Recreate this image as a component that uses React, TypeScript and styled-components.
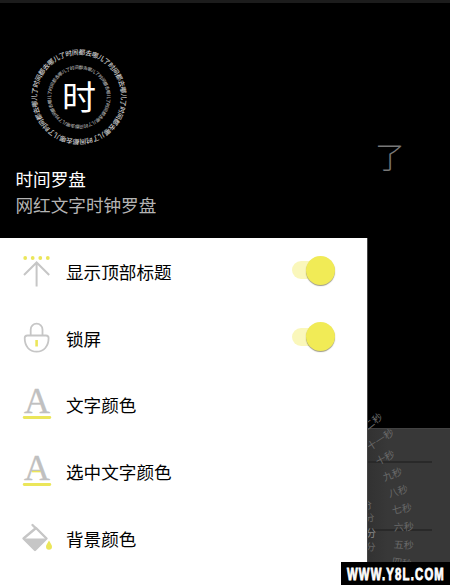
import React from 'react';
import styled, { createGlobalStyle } from 'styled-components';

const GlobalStyle = createGlobalStyle`
  body {
    margin: 0;
    background: #000;
    font-family: 'Noto Sans CJK SC', sans-serif;
  }
`;

const Screen = styled.div`
  position: relative;
  width: 450px;
  height: 585px;
  overflow: hidden;
  background: #000;
`;

const StatusBar = styled.div`
  height: 3px;
  background: #1c1c1c;
`;

const Drawer = styled.aside`
  position: relative;
  z-index: 1;
  width: 367px;
  height: 582px;
  display: flex;
  flex-direction: column;
  background: #fff;
  border-right: 1px solid #444;
`;

const DrawerHeader = styled.header`
  box-sizing: border-box;
  width: 368px;
  height: 235px;
  padding: 44px 0 0 15.5px;
  background: #000;
`;

const Logo = styled.svg`
  display: block;
  width: 100px;
  height: 100px;
  margin-left: 13.5px;
`;

const AppName = styled.h1`
  margin: 19px 0 0;
  font-size: 17.6px;
  line-height: 26px;
  font-weight: 400;
  color: #fff;
`;

const Tagline = styled.p`
  margin: 0;
  font-size: 17.6px;
  line-height: 26px;
  color: #b4b4b4;
`;

const Menu = styled.ul`
  margin: 0;
  padding: 1px 0 0;
  list-style: none;
`;

const MenuItem = styled.li`
  display: flex;
  align-items: center;
  height: 66.6px;
  padding: 0 32px 0 20px;
`;

const IconSvg = styled.svg`
  flex: none;
  width: 36px;
  height: 36px;
  margin-right: 10px;
  overflow: visible;
`;

const Label = styled.span`
  flex: 1;
  font-size: 17.6px;
  line-height: 26px;
  color: #000;
`;

const Switch = styled.span`
  display: flex;
  justify-content: flex-end;
  align-items: center;
  width: 43px;
  height: 18px;
  margin-top: -4px;
  border-radius: 9px;
  background: linear-gradient(90deg, #faf7bb 60%, transparent 60%);
`;

const Knob = styled.span`
  width: 29px;
  height: 29px;
  border-radius: 50%;
  background: #f1eb56;
  box-shadow: 0 1px 1px rgba(90, 85, 50, 0.6);
`;

const Backdrop = styled.div`
  position: absolute;
  inset: 0;
`;

const DimChar = styled.span`
  position: absolute;
  left: 375px;
  top: 135px;
  font-size: 30px;
  line-height: 40px;
  font-weight: 300;
  color: #787878;
`;

const Panel = styled.div`
  position: absolute;
  left: 368px;
  right: 0;
  top: 428px;
  bottom: 0;
  border-top: 1px solid #424242;
  background: linear-gradient(90deg, #323232, #383838 20px);
`;

const Divider = styled.div`
  width: 64px;
  height: 2px;
  margin-top: 32px;
  background: #292929;

  & + & {
    margin-top: 66px;
  }
`;

const Dial = styled.svg`
  position: absolute;
  inset: 0;
  width: 450px;
  height: 585px;
  font-size: 10px;
`;

const Watermark = styled.svg`
  position: absolute;
  z-index: 2;
  right: 0;
  bottom: 0;
  width: 109px;
  height: 23px;
  overflow: visible;
  background: #000;
  font: 900 17px 'Liberation Sans', sans-serif;
`;

const PHRASE = '时间都去哪儿了';
const RING = PHRASE.repeat(6).split('');

const SECONDS = ['十二秒', '十一秒', '十秒', '九秒', '八秒', '七秒', '六秒', '五秒', '四秒'];
const DIAL_X = 232;
const DIAL_Y = 536;

const Ring: React.FC<{ radius: number; size: number; color: string }> = ({ radius, size, color }) => (
  <g fontSize={size} fill={color} fontWeight={500} textAnchor="middle">
    {RING.map((char, i) => (
      <text key={i} x="50" y={50 - radius} transform={`rotate(${46.6 + (i * 360) / RING.length} 50 50)`}>
        {char}
      </text>
    ))}
  </g>
);

const TopIcon = () => (
  <IconSvg viewBox="0 0 36 36" fill="none" stroke="#c6c6c6" strokeWidth="2">
    <path d="M16.6 32.5V8.500M4 21 16.6 8.500 29.2 21" />
    <g fill="#ebe65a" stroke="none">
      <circle cx="5.2" cy="4" r="1.9" />
      <circle cx="12.7" cy="4" r="1.9" />
      <circle cx="20.3" cy="4" r="1.9" />
      <circle cx="27.8" cy="4" r="1.9" />
    </g>
  </IconSvg>
);

const LockIcon = () => (
  <IconSvg viewBox="0 0 36 36" fill="none" stroke="#c6c6c6" strokeWidth="1.8">
    <path d="M10.7 14.500V8.500a5.9 5.9 0 0 1 11.8 0v6" />
    <path d="M7.3 14.500H26c1.7 0 2.6 1 2.6 2.6 0 8.3-4.8 13.600-12 13.600S4.7 25.400 4.7 17.100c0-1.600.9-2.600 2.600-2.600Z" />
    <path d="M16.6 19v6.5" stroke="#ebe65a" strokeWidth="2.6" />
  </IconSvg>
);

const LetterIcon: React.FC<{ selected?: boolean }> = ({ selected }) => (
  <IconSvg viewBox="0 0 36 36">
    <text
      x="17"
      y="26"
      textAnchor="middle"
      fontFamily="Liberation Serif, serif"
      fontSize="36"
      fill="#c0c0c0"
      stroke="#c0c0c0"
      strokeWidth="0.3"
    >
      A
    </text>
    {selected && <path d="M12 17.6h8.500" stroke="#ebe65a" strokeWidth="1.5" />}
    <path d="M4.200 30.5h25.600" stroke="#ebe65a" strokeWidth="2.8" strokeLinecap="round" />
  </IconSvg>
);

const BucketIcon = () => (
  <IconSvg viewBox="0 0 36 36">
    <path
      d="M12.5 4 16 7.500M16 7 26.5 17.500 15 29 3.5 17.500Z"
      fill="none"
      stroke="#c6c6c6"
      strokeWidth="2.4"
      strokeLinecap="round"
      strokeLinejoin="round"
    />
    <path d="M3.5 17.500h23L15 29Z" fill="#c6c6c6" />
    <path d="M29 19.500c1.3 2.700 3 4.3 3 6.300a3 3 0 0 1-6 0c0-2 1.700-3.600 3-6.300Z" fill="#ebe65a" />
  </IconSvg>
);

const items = [
  { label: '显示顶部标题', icon: <TopIcon />, toggle: true },
  { label: '锁屏', icon: <LockIcon />, toggle: true },
  { label: '文字颜色', icon: <LetterIcon /> },
  { label: '选中文字颜色', icon: <LetterIcon selected /> },
  { label: '背景颜色', icon: <BucketIcon /> },
];

const App: React.FC = () => {
  return (
    <Screen>
      <GlobalStyle />
      <Backdrop>
        <DimChar>了</DimChar>
        <Panel>
          <Divider />
          <Divider />
        </Panel>
        <Dial viewBox="0 0 450 585">
          {SECONDS.map((text, i) => (
            <text
              key={text}
              x={DIAL_X + 162}
              y={DIAL_Y + 3.5}
              fill="#696969"
              transform={`rotate(${-39 + i * 6} ${DIAL_X} ${DIAL_Y})`}
            >
              {text}
            </text>
          ))}
          {[505, 518, 533, 547].map((y, i) => (
            <text
              key={y}
              x={[362, 364.5, 366, 365.5][i]}
              y={y + 3.5}
              fill={y === 533 ? '#888' : '#666'}
              transform={`rotate(${(i - 2) * 6} 370 ${y})`}
            >
              分
            </text>
          ))}
        </Dial>
      </Backdrop>
      <StatusBar />
      <Drawer>
        <DrawerHeader>
          <Logo viewBox="0 0 100 100">
            <Ring radius={42.3} size={6.7} color="#d0d0d0" />
            <Ring radius={28} size={4.5} color="#b4b4b4" />
            <text x="50" y="62.5" textAnchor="middle" fontSize="34" fill="#fff">
              时
            </text>
          </Logo>
          <AppName>时间罗盘</AppName>
          <Tagline>网红文字时钟罗盘</Tagline>
        </DrawerHeader>
        <Menu>
          {items.map((item) => (
            <MenuItem key={item.label}>
              {item.icon}
              <Label>{item.label}</Label>
              {item.toggle && (
                <Switch>
                  <Knob />
                </Switch>
              )}
            </MenuItem>
          ))}
        </Menu>
      </Drawer>
      <Watermark viewBox="0 0 109 23">
        <text
          x="6"
          y="17.5"
          textLength="98"
          lengthAdjust="spacingAndGlyphs"
          fill="#fff"
          stroke="#fff"
          strokeWidth="0.9"
          letterSpacing="1.8"
        >
          WWW.Y8L.COM
        </text>
      </Watermark>
    </Screen>
  );
};

export default App;
